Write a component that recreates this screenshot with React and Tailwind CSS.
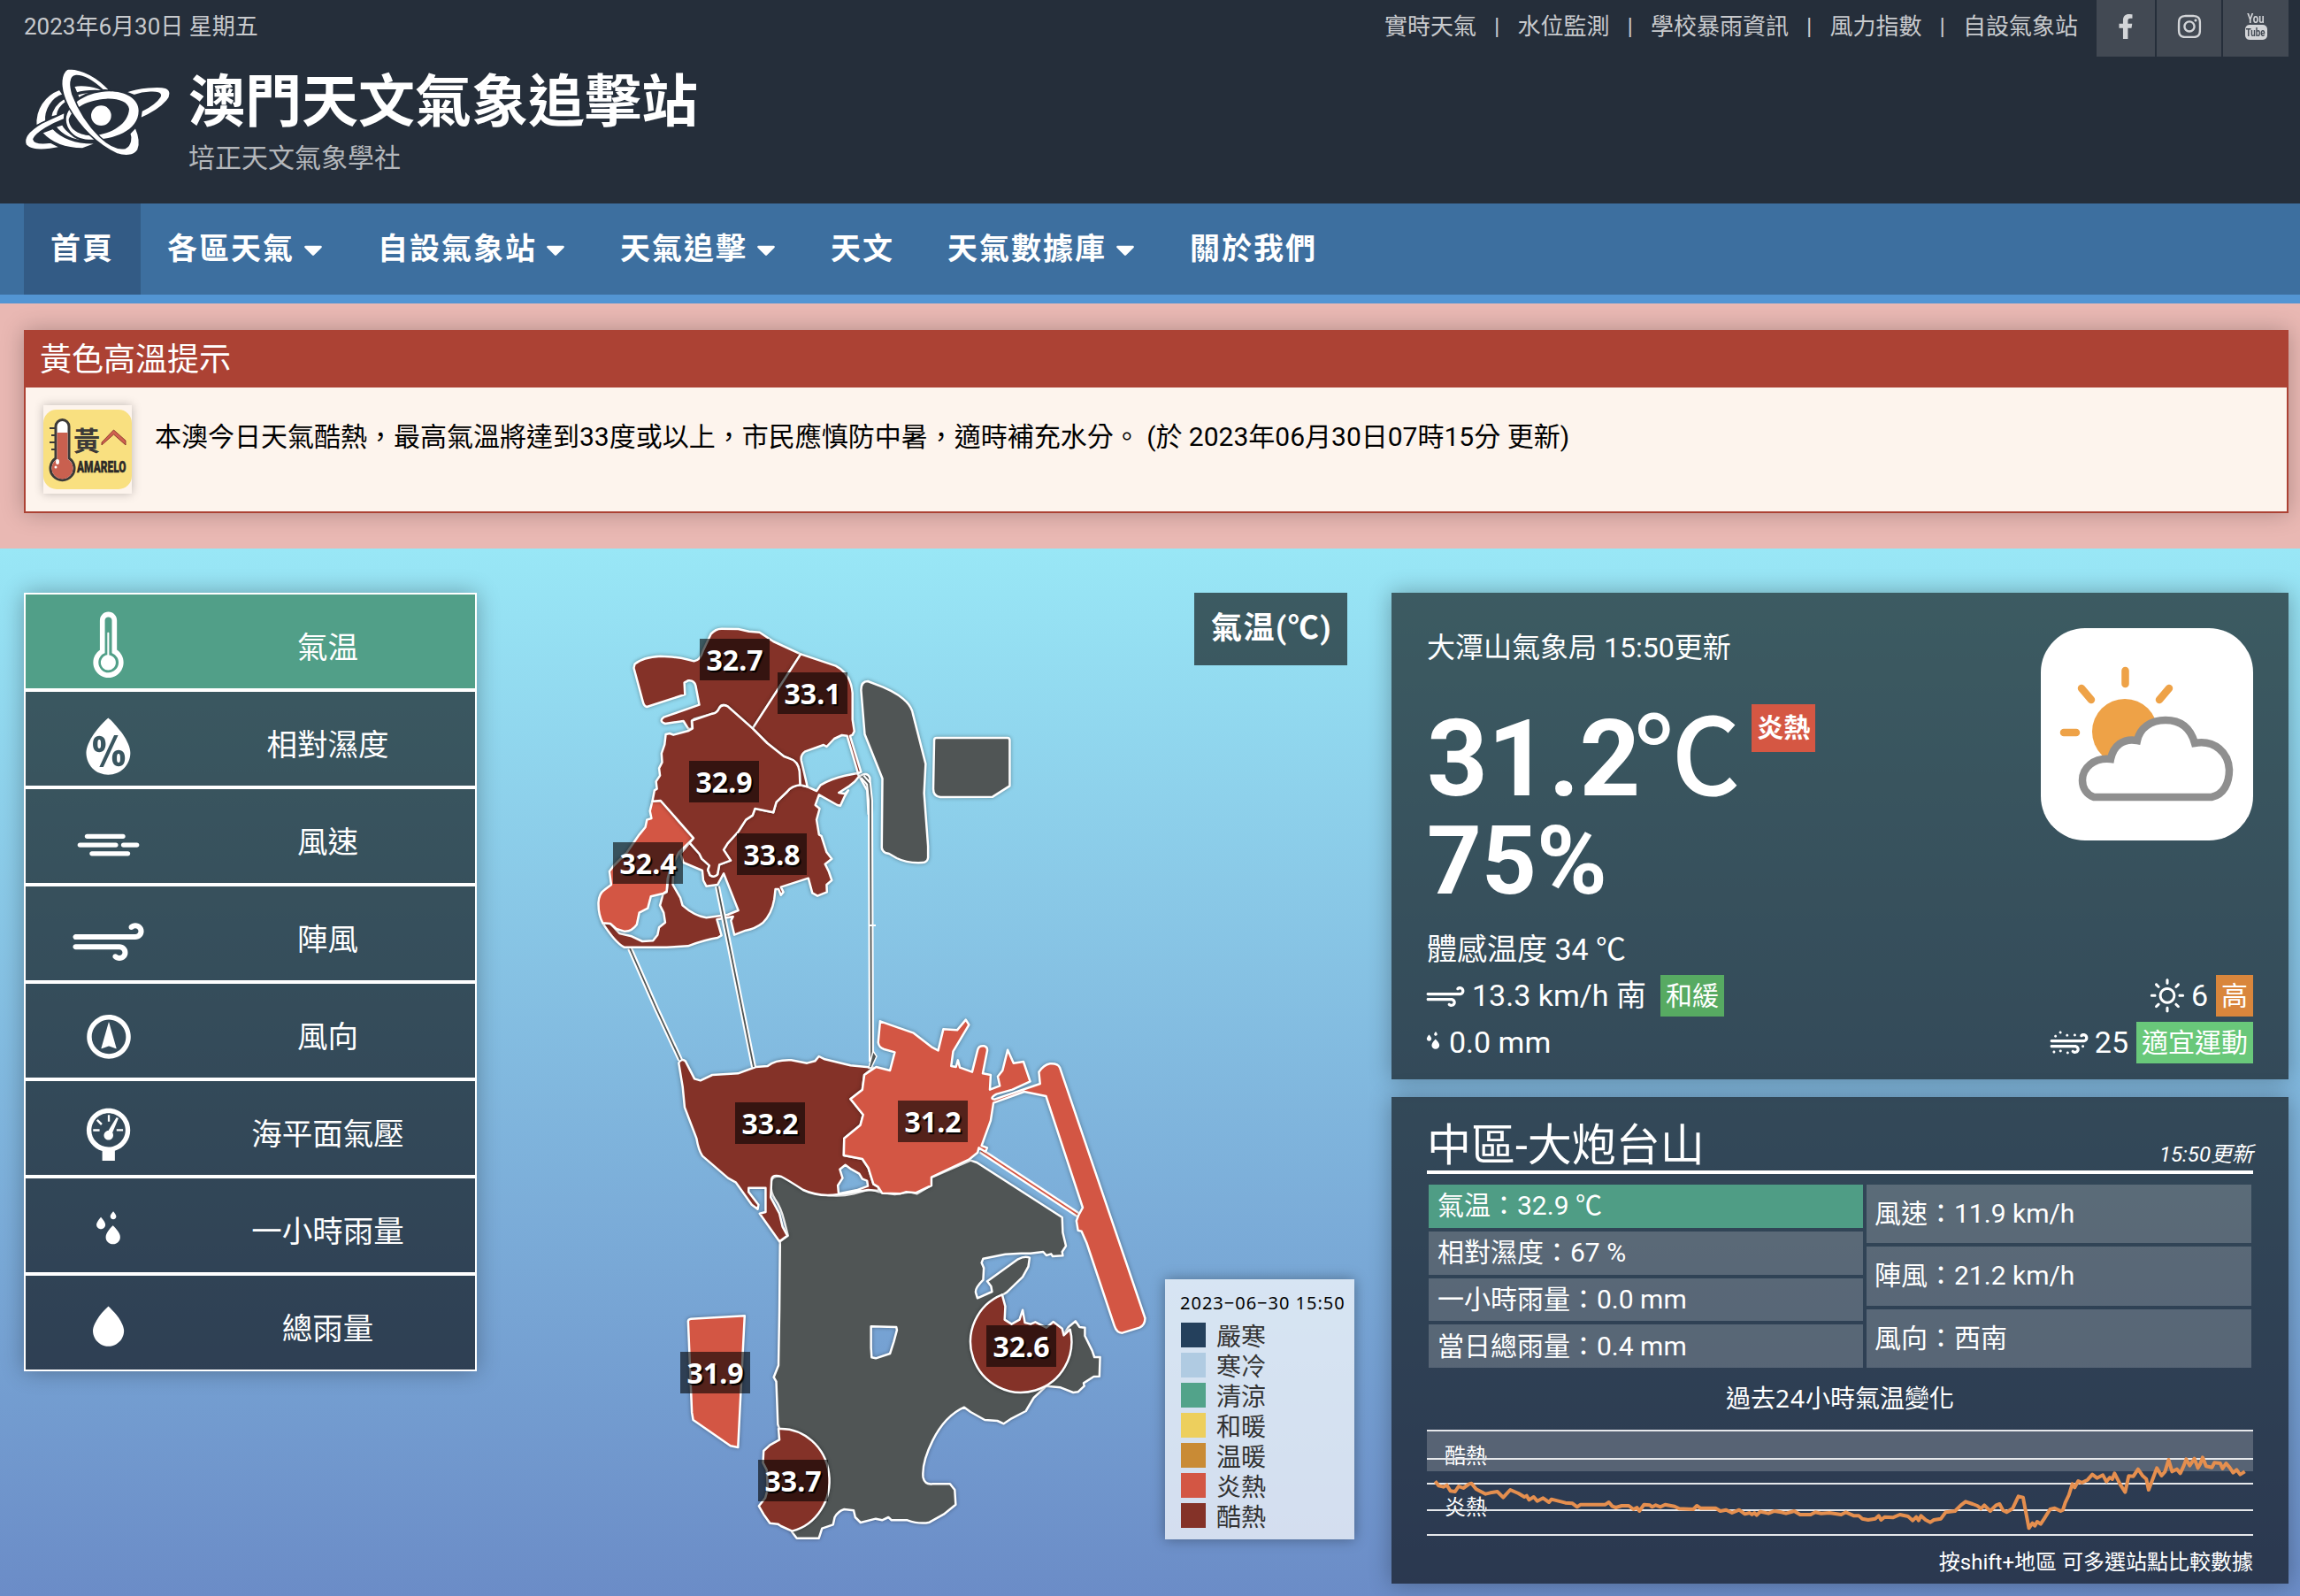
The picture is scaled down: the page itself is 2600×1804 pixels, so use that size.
import React from 'react';
import { FaFacebookF, FaInstagram, FaCaretDown } from 'react-icons/fa';
import {
  WiThermometer, WiHumidity, WiWindy, WiStrongWind, WiWindDeg,
  WiBarometer, WiRaindrops, WiRaindrop, WiDaySunny, WiSandstorm,
} from 'react-icons/wi';

const topLinks = ['實時天氣', '水位監測', '學校暴雨資訊', '風力指數', '自設氣象站'];

const navItems = [
  { label: '首頁', active: true },
  { label: '各區天氣', menu: true },
  { label: '自設氣象站', menu: true },
  { label: '天氣追擊', menu: true },
  { label: '天文' },
  { label: '天氣數據庫', menu: true },
  { label: '關於我們' },
];

const layers = [
  { label: '氣温', Icon: WiThermometer, active: true },
  { label: '相對濕度', Icon: WiHumidity },
  { label: '風速', Icon: WiWindy },
  { label: '陣風', Icon: WiStrongWind },
  { label: '風向', Icon: WiWindDeg, small: true },
  { label: '海平面氣壓', Icon: WiBarometer },
  { label: '一小時雨量', Icon: WiRaindrops },
  { label: '總雨量', Icon: WiRaindrop },
];

const legend = [
  ['嚴寒', 'bg-[#24405c]'],
  ['寒冷', 'bg-[#b0cbe2]'],
  ['清涼', 'bg-[#52a38a]'],
  ['和暖', 'bg-[#edcf5d]'],
  ['温暖', 'bg-[#c98b35]'],
  ['炎熱', 'bg-[#d35644]'],
  ['酷熱', 'bg-[#843228]'],
];

const stations = [
  { value: '32.7', x: 791, y: 722 },
  { value: '33.1', x: 879, y: 760 },
  { value: '32.9', x: 779, y: 860 },
  { value: '32.4', x: 693, y: 952 },
  { value: '33.8', x: 833, y: 942 },
  { value: '33.2', x: 831, y: 1246 },
  { value: '31.2', x: 1015, y: 1244 },
  { value: '31.9', x: 769, y: 1528 },
  { value: '33.7', x: 857, y: 1650 },
  { value: '32.6', x: 1115, y: 1498 },
];

const MAP_LEFT = 539;
const MAP_TOP = 670;

function Logo() {
  return (
    <svg viewBox="0 0 600 390" className="-mt-[4px] -ml-[17px] h-[130px] w-[200px] shrink-0" fill="#fff" stroke="#252e3a" strokeWidth="5">
      <path d="M172 123C120 143 88 190 92 247L126 231C122 195 146 152 184 141Z" />
      <path d="M112 270C142 303 190 324 250 324L304 304C240 308 186 293 150 256Z" />
      <path d="M142 218C146 188 160 170 188 153L194 166C174 180 165 195 164 212Z" />
      <path d="M158 250C182 282 220 297 262 298C228 286 196 270 182 242Z" />
      <path d="M220 112C250 106 300 112 322 129C290 127 254 128 230 136Z" />
      <path d="M232 140C256 132 290 130 308 134C275 138 252 145 238 156Z" />
      <path d="M190 201L110 238C60 268 48 292 58 312C74 330 120 331 176 320L142 303C110 307 86 304 84 292C92 270 150 238 188 224Z" />
      <path d="M396 132C440 116 510 110 532 118C552 125 550 147 536 162C515 187 482 206 446 222L450 196C480 181 505 160 513 147C518 135 500 132 480 133C460 134 440 138 425 143Z" />
      <path fill="#252e3a" d="M445 195C445 150 395 125 340 125C265 127 205 160 190 215C185 255 215 295 270 298C345 302 430 270 445 195Z" />
      <path fillRule="evenodd" stroke="none" d="M440 195C440 155 395 130 340 130C270 132 210 165 195 215C190 250 215 290 270 293C340 297 440 270 440 195ZM408 190C405 165 370 153 330 155C270 158 215 185 203 225C205 260 240 280 285 280C350 275 405 240 408 190Z" />
      <path d="M206 53C252 55 302 83 344 127L318 125C285 95 250 76 228 77C205 80 208 110 216 140C235 190 270 245 310 285C345 318 375 326 395 322C415 312 415 285 410 273L430 252C442 280 446 310 438 328C425 352 390 350 365 341C300 312 240 250 203 185C178 135 177 100 181 82C186 63 195 53 206 53Z" />
      <circle cx="313" cy="212" r="34" stroke="none" />
    </svg>
  );
}

function OldYoutube() {
  return (
    <div className="flex flex-col items-center font-bold">
      <span className="h-[13px] scale-x-75 text-[15px] leading-[13px]">You</span>
      <span className="flex h-[17px] w-[25px] items-center justify-center rounded-[5px] bg-[#d3d5d8] text-[13px] leading-none text-[#424953]">
        <span className="scale-x-75">Tube</span>
      </span>
    </div>
  );
}

function AlertImage() {
  return (
    <svg viewBox="0 0 100 100" className="size-[100px] bg-[#fdf4ed] shadow-[0_0_10px_rgba(0,0,0,0.25)]">
      <rect x="0" y="5" width="100" height="90" rx="15" fill="#f9e080" />
      <path d="M7 26h8M9 34h6M7 42h8M9 50h6" stroke="#3c3a38" strokeWidth="2" />
      <path d="M14 60V24a7.500 7.500 0 0 1 15 0V60a13.500 13.500 0 1 1 -15 0Z" fill="#fff" stroke="#3c3a38" strokeWidth="3" />
      <path d="M15.500 31H27.500V61a12 12 0 1 1 -12 0Z" fill="#c9604f" />
      <ellipse cx="16" cy="64" rx="2" ry="3" fill="#fff" />
      <circle cx="14" cy="70" r="1.500" fill="#fff" />
      <text x="34" y="51" fontSize="30" fontWeight="700" fill="#3c3a38" fontFamily="Noto Sans CJK TC">黃</text>
      <path d="M66 42L79.500 28L93 40V45L79.500 33L66 45Z" fill="#d0604f" stroke="#8d3b31" strokeWidth="1" />
      <g transform="translate(38 76) scale(0.68 1)">
        <text x="0" y="0" fontSize="17.500" fontWeight="900" fill="#2c2a28" stroke="#2c2a28" strokeWidth="0.500" fontFamily="Roboto">AMARELO</text>
      </g>
    </svg>
  );
}

function Shape({ d, fill, rule }) {
  return (
    <path
      d={d}
      fill={fill}
      fillRule={rule}
      stroke="#fff"
      strokeWidth="2.500"
      strokeLinejoin="round"
      vectorEffect="non-scaling-stroke"
      className="[filter:drop-shadow(0_0_6px_rgba(0,0,0,0.35))]"
    />
  );
}

const HOT = '#843228';
const WARM = '#d35644';
const NONE = '#505555';

function Bridge({ points }) {
  return (
    <g fill="none">
      <polyline points={points} stroke="#fff" strokeWidth="6" />
      <polyline points={points} stroke={NONE} strokeWidth="1.800" />
    </g>
  );
}

function MacauMap() {
  return (
    <svg viewBox="539 670 1034 1134" className="h-[1134px] w-[1034px]">
      <g transform="translate(740 1300) scale(0.35714 0.33333)">
        <Shape
          fill={NONE}
          rule="evenodd"
          d="M368 110Q370 84 405 90Q480 140 530 150Q580 160 630 148L685 132L710 142L760 150L810 142L830 148L875 120L872 95L1000 35L1020 42L1290 228L1292 280L1302 325L1290 345L1292 358L1260 360L1255 352L1240 357L1230 345L1190 350L1160 350L1110 353L1040 368L1035 382L1042 400L1040 440Q1012 470 1017 485L1022 502L1068 480L1065 462L1053 445L1150 370Q1172 358 1187 365L1183 395L1165 430L1115 482L1100 492L1110 620L1280 640L1295 625L1310 600L1332 580L1345 600L1362 602L1362 630L1385 680L1392 702L1410 702L1408 767L1390 768L1358 790L1360 800L1340 820L1325 822L1285 805L1240 800L1200 840L1175 885L1130 910L1105 928L1085 918L1045 915L1000 888L980 872Q920 900 880 985Q845 1060 850 1110Q855 1135 880 1132L935 1132L950 1152L953 1202L915 1235L870 1262Q840 1270 800 1255L750 1255L740 1245L720 1255L700 1250L652 1263L635 1245L630 1222L600 1218Q580 1225 570 1245L565 1270L530 1283L520 1316L450 1316L435 1295L393 1150L395 945L390 930L387 840L385 785L377 770L392 730L395 540L397 310L422 290L410 240Q400 195 380 165Q366 140 368 110ZM685 598L765 600L767 610L757 650L745 690L700 706L687 703L685 670Z"
        />
        <Shape fill={HOT} d="M1100 490A160 172 0 1 0 1315 608L1295 628L1290 605L1262 582L1240 602L1205 583L1190 590L1172 585L1165 542L1155 575L1130 590L1108 575L1110 530Z" />
        <Shape fill={HOT} d="M392 945A154 176 0 0 1 435 1292L400 1275L390 1268L365 1265L345 1235L330 1207L350 1180L358 1150L355 1085L343 1060L345 1020L365 1000L395 982Z" />
        <Shape fill={WARM} d="M106 580Q107 573 115 572L285 562L264 1008L240 1003L122 915L118 890Z" />
      </g>
      <g transform="translate(640 1060) scale(0.44643 0.33333)">
        <Shape
          fill={HOT}
          rule="evenodd"
          d="M285 425Q290 408 302 418L325 478L340 484L370 465L435 460L480 438L510 435Q530 413 570 415L610 425L630 418L640 402L655 412L720 433L778 440L755 465L750 515L720 547L752 600L745 635L704 680L703 738L750 750L765 780L778 835L790 845L792 858L765 855L690 870Q640 880 600 855Q560 820 545 810Q522 800 520 820L518 880L540 935L548 980L560 1010L540 1030L490 935L505 930L505 848L462 848L462 862L487 905L485 920L470 905L430 830L410 815L345 740Q335 720 330 680L300 575L295 505ZM690 868L688 840L700 815L693 785L707 770L722 785L742 800L750 818L762 824L764 842L735 856Z"
        />
        <g>
          <path d="M1050 722L1300 943" stroke="#fff" strokeWidth="6.500" vectorEffect="non-scaling-stroke" />
          <path d="M1050 722L1300 943" stroke={WARM} strokeWidth="1.800" vectorEffect="non-scaling-stroke" />
        </g>
        <Shape
          fill={WARM}
          d="M795 283L880 323L925 370L942 382L955 310L990 313L1012 278L1020 295L980 385L975 435L987 438L992 415L997 440L1028 455L1042 380Q1045 365 1058 367Q1068 370 1066 385L1055 460L1075 465L1073 515L1098 502L1093 470L1105 450L1118 380L1133 425L1158 420L1175 487L1130 515L1090 530Q1070 545 1085 548L1200 495L1197 455Q1210 430 1225 427Q1245 425 1250 440L1466 1290Q1466 1313 1452 1322L1408 1340Q1394 1340 1388 1315L1318 1035L1305 995L1296 992L1292 960L1297 942L1308 915L1215 537L1160 522L1082 560L1075 620L1052 705L1066 712L1062 726L1045 712L1042 728L1020 752L925 812L925 840L885 865L860 862L845 868L800 866L790 845L778 835L765 780L750 750L703 738L704 680L745 635L752 600L720 547L750 515L755 465L785 438L820 450L832 388L805 378Q792 372 790 355Z"
        />
      </g>
      <Bridge points="712,1072 742,1140 769,1198" />
      <g transform="translate(640 680) scale(0.34439 0.33333)">
        <Shape fill={NONE} d="M968 300Q968 270 990 270L1040 290Q1130 330 1138 380L1180 550L1175 650L1188 830L1188 868Q1186 884 1170 885Q1120 888 1085 870L1060 855L1048 852Q1037 845 1036 835L1038 600L980 450Z" />
        <Shape fill={NONE} d="M1216 462L1448 462Q1456 462 1456 470L1456 625L1400 662L1228 663Q1205 660 1205 635L1208 470Q1208 462 1216 462Z" />
        <Shape fill={NONE} d="M962 592Q988 575 997 598L1000 700L992 720L988 640Z" />
        <Shape
          fill={HOT}
          d="M768 622L792 628L822 642L835 622Q870 600 915 590L955 582L962 592L948 610L930 625L895 648L915 652L926 640L912 665L900 692L890 690L830 655L818 690L832 702L822 740L830 790L838 795L855 850L872 872L850 890L862 915L872 945L855 960L856 985L825 998L808 988L795 938L705 968L713 985L705 995L697 975L687 975L683 1010Q675 1060 645 1090Q620 1110 590 1115L552 1130L541 1082L548 1068L495 1078L510 1132L497 1140Q460 1145 400 1168L330 1172L190 1172Q160 1155 120 1090L145 1092L175 1125L215 1135L250 1152L285 1150L300 1130L305 1105L325 1088L320 1055L308 1030L318 992L330 985L338 912L352 890L350 960L375 1005L382 1030Q420 1065 460 1072L530 1062L565 1047L517 922L497 960L460 965L450 945L447 912L385 885L375 855L405 818L437 855L445 872L470 895L465 910L472 928Q485 938 497 925L503 892L540 878L517 842L530 820L565 780L590 740L612 725L620 702L680 715L690 680L725 645Q740 625 768 622Z"
        />
        <Shape fill={WARM} d="M283 677L310 675L418 802L370 850L340 912L333 940L330 982L318 990L278 1000L268 1040L240 1055L232 1095Q215 1120 190 1118L165 1110L145 1092L120 1090Q105 1060 106 1020Q108 990 125 978L148 960L142 915L155 897L200 850L240 790L260 765L265 740L280 735L275 710Z" />
        <Shape fill={HOT} d="M222 225L225 212Q250 188 310 185Q370 186 420 202Q440 200 450 165L475 110Q490 92 510 92L565 93L600 101L635 104L680 135L770 178L612 430L530 355Q510 345 502 362Q495 378 480 380L420 398L412 404L413 430L402 433L385 405L325 414Q303 405 320 392L437 350L425 285Q420 265 400 268L388 275L390 315L265 357Q255 355 252 340Z" />
        <Shape fill={HOT} d="M770 178L885 218Q935 245 940 310L940 400L946 440L940 452L932 456L968 578L958 582L922 455L905 453L880 465L855 492L845 486L785 508Q768 520 772 540L792 628L768 622L766 575Q760 540 735 533L715 525L660 480L612 430Z" />
        <Shape fill={HOT} d="M612 430L660 480L715 525L735 533Q760 540 766 575L768 622Q740 625 725 645L690 680L680 715L620 702L612 725L590 740L565 780L530 820L517 842L540 878L503 892L497 925Q485 938 472 928L465 910L470 895L445 872L437 855L405 818L418 802L310 675L283 677L290 640L298 635L295 610L308 590L305 565L315 545L313 515L323 485L327 450L340 447L352 452L402 438L415 430L413 404L480 380Q495 378 502 362Q510 345 530 355Z" />
      </g>
      <Bridge points="811,1002 852,1206" />
      <Bridge points="975,878 982,886 984,905 985,1200" />
      <path d="M987 1188L991 1194L985 1207L982 1207Z" fill={NONE} stroke="#fff" strokeWidth="1.500" />
      <path d="M982 1046h8" stroke="#fff" strokeWidth="2" />
    </svg>
  );
}

function Tag({ className, children }) {
  return <span className={`flex items-center justify-center px-[6px] text-[30px] leading-none ${className}`}>{children}</span>;
}

function Celsius({ className = '' }) {
  return <span className={`font-['Noto_Sans_CJK_TC'] leading-[0] ${className}`}>℃</span>;
}

function WeatherIcon() {
  return (
    <svg viewBox="0 0 240 240" className="size-[240px] rounded-[50px] bg-white">
      <g stroke="#eea247" strokeWidth="8.500" strokeLinecap="round">
        <path d="M95.500 48V63M46 68L57 81M145 68L134 81M26 118H40" />
      </g>
      <circle cx="95" cy="117" r="37" fill="#eea247" />
      <path
        d="M60 191H193C207 188 213 175 213 160C212 141 197 126 174 130C169 112 158 104 141 104C124 104 112 113 109 127C93 124 82 133 79 148C60 146 47 158 47 172C47 181 52 188 60 191Z"
        fill="#fff"
        stroke="#8f8f8f"
        strokeWidth="8.500"
      />
    </svg>
  );
}

function CurrentPanel() {
  return (
    <section className="flex h-[550px] flex-col bg-black/60 px-10 pt-10 text-white shadow-[0_0_24px_rgba(0,0,0,0.3)]">
      <div className="flex h-[352px] justify-between">
        <div>
          <div className="mt-[1px] text-[32px] leading-[42px]">大潭山氣象局 15:50更新</div>
          <div className="mt-[53px] flex h-[104px]">
            <div className="text-[120px] leading-[104px] font-bold">31.2<Celsius className="-ml-[7px] font-medium" /></div>
            <Tag className="-mt-[10px] ml-[13px] h-[54px] bg-[#d55743] font-bold">炎熱</Tag>
          </div>
          <div className="mt-[9px] text-[108px] leading-[108px] font-bold">75%</div>
        </div>
        <WeatherIcon />
      </div>
      <div className="-mt-[10px] text-[34px] leading-[42px]">體感温度 34 <Celsius /></div>
      <div className="mt-[5px] flex h-[53px] items-center justify-between text-[34px]">
        <div className="flex items-center">
          <WiStrongWind className="-my-2 mr-[3px] -ml-[6px] size-[54px]" />
          13.3 km/h 南
          <Tag className="ml-[16px] h-[47px] bg-[#57aa62]">和緩</Tag>
        </div>
        <div className="flex items-center">
          <WiDaySunny className="-my-2 size-[54px]" />
          6
          <Tag className="ml-[9px] h-[47px] bg-[#d9863c]">高</Tag>
        </div>
      </div>
      <div className="flex h-[53px] items-center justify-between text-[34px]">
        <div className="flex items-center">
          <WiRaindrops className="-my-2 -mr-[9px] -ml-[20px] size-[54px]" />
          0.0 mm
        </div>
        <div className="flex items-center">
          <WiSandstorm className="-my-2 mr-[2px] size-[54px]" />
          25
          <Tag className="ml-[9px] h-[47px] bg-[#69c87a]">適宜運動</Tag>
        </div>
      </div>
    </section>
  );
}

const tempLine =
  '94,403 100,418 108,422 114,416 120,436 128,438 134,420 142,426 152,412 156,410 164,430 172,438 180,446 188,442 200,438 210,458 222,432 236,444 246,456 250,452 254,466 262,456 268,470 278,460 288,474 292,464 304,470 316,476 328,478 336,490 342,482 384,482 390,474 396,488 402,492 412,486 424,486 432,498 438,492 442,504 450,482 460,484 464,490 470,484 478,490 486,482 502,488 510,496 534,498 540,486 546,494 572,494 580,504 590,500 600,510 612,500 622,514 630,510 634,516 638,510 642,518 648,506 662,512 672,504 684,508 692,512 706,504 716,516 734,516 742,508 752,512 766,510 786,516 794,508 808,520 816,520 822,530 832,534 844,530 850,520 854,534 860,524 874,526 886,516 900,522 908,536 914,524 918,536 922,520 930,534 938,542 944,534 956,530 964,508 980,504 990,484 998,472 1010,480 1018,486 1024,496 1030,484 1040,504 1050,484 1056,480 1062,502 1068,508 1078,496 1088,454 1096,458 1100,500 1106,562 1112,545 1116,554 1120,540 1126,548 1132,530 1142,498 1150,494 1160,504 1164,500 1168,475 1174,450 1180,412 1184,424 1190,402 1196,408 1206,398 1214,380 1222,392 1232,382 1238,404 1244,390 1248,396 1252,376 1262,415 1270,440 1276,385 1284,386 1292,362 1300,385 1306,395 1310,432 1318,390 1324,358 1332,384 1338,370 1344,330 1350,370 1358,362 1364,376 1370,350 1374,328 1380,350 1388,326 1394,358 1398,344 1402,322 1408,352 1418,356 1422,340 1432,342 1436,360 1442,342 1448,356 1454,374 1460,364 1466,380 1474,370';

function TempChart() {
  return (
    <svg viewBox="1613 1607 934 140" className="h-[140px] w-[934px]">
      <rect x="1613" y="1617" width="934" height="46" fill="#fff" fillOpacity="0.2" />
      <text x="1633" y="1654" fontSize="24" fill="#fff">酷熱</text>
      <text x="1633" y="1712" fontSize="24" fill="#fff">炎熱</text>
      <path d="M1613 1617H2547M1613 1649H2547M1613 1677H2547M1613 1707H2547M1613 1735H2547" stroke="#e6e8eb" strokeWidth="2" />
      <g transform="translate(1560 1540) scale(0.66327 0.33333)">
        <polyline points={tempLine} fill="none" stroke="#e58f4f" strokeWidth="4" strokeLinejoin="round" vectorEffect="non-scaling-stroke" />
      </g>
    </svg>
  );
}

const leftReadings = [
  { label: '氣温：32.9 ', celsius: true },
  { label: '相對濕度：67 %' },
  { label: '一小時雨量：0.0 mm' },
  { label: '當日總雨量：0.4 mm' },
];
const rightReadings = ['風速：11.9 km/h', '陣風：21.2 km/h', '風向：西南'];

function StationPanel() {
  return (
    <section className="flex h-[550px] flex-col bg-black/60 px-10 text-white shadow-[0_0_24px_rgba(0,0,0,0.3)]">
      <div className="flex h-[87px] items-end justify-between border-b-4 border-white">
        <h2 className="text-[50px] leading-[56px]">中區-大炮台山</h2>
        <span className="pb-[3px] text-[24px] leading-[30px] italic">15:50更新</span>
      </div>
      <div className="mx-[2px] mt-[12px] flex h-[207px] gap-1 text-[30px] leading-none">
        <div className="grid w-[491px] grid-rows-4 gap-1">
          {leftReadings.map(({ label, celsius }) => (
            <div key={label} className={`flex items-center pl-[10px] ${celsius ? 'bg-[#4f9d85]' : 'bg-white/20'}`}>
              <span className="whitespace-pre">{label}{celsius && <Celsius />}</span>
            </div>
          ))}
        </div>
        <div className="grid flex-1 grid-rows-3 gap-1">
          {rightReadings.map((r) => (
            <div key={r} className="flex items-center bg-white/20 pl-[9px]">{r}</div>
          ))}
        </div>
      </div>
      <div className="mt-[14px] text-center text-[28px] leading-[40px]">
        過去<span className="font-['Noto_Sans'] tracking-[1px]">24</span>小時氣温變化
      </div>
      <div className="mt-[5px]"><TempChart /></div>
      <div className="mt-[1px] text-right text-[24px] leading-[36px]">按shift+地區 可多選站點比較數據</div>
    </section>
  );
}

export default function App() {
  return (
    <div className="h-[1804px] w-[2600px] overflow-hidden font-[Roboto,'Noto_Sans_CJK_TC',sans-serif]">
      <header className="h-[230px] bg-[#252e3a] pr-[13px] pl-[27px]">
        <div className="flex h-16 justify-between text-[26px] leading-[60px] text-[#c8cacd]">
          <div>2023年6月30日 星期五</div>
          <div className="flex">
            <ul className="mr-[21px] flex">
              {topLinks.map((t, i) => (
                <li key={t} className="flex">
                  {i > 0 && <span className="w-[46.500px] text-center">|</span>}
                  {t}
                </li>
              ))}
            </ul>
            <div className="flex gap-[2px] text-[#d3d5d8]">
              <span className="flex w-[66px] items-center justify-center bg-[#424953]"><FaFacebookF className="-mt-1 size-7" /></span>
              <span className="flex w-[73px] items-center justify-center bg-[#424953]"><FaInstagram className="-mt-1 size-[30px]" /></span>
              <span className="flex w-[74px] items-center justify-center bg-[#424953] pb-1"><OldYoutube /></span>
            </div>
          </div>
        </div>
        <div className="flex">
          <Logo />
          <div className="ml-[3px] pt-[12px]">
            <h1 className="text-[64px] leading-[80px] font-bold text-white">澳門天文氣象追擊站</h1>
            <p className="mt-[3px] text-[30px] leading-[40px] text-[#b4b7bb]">培正天文氣象學社</p>
          </div>
        </div>
      </header>

      <nav className="flex h-[113px] border-b-[10px] border-[#5395d3] bg-[#3d6f9f] pl-[27px] text-[34px] font-bold tracking-[2px] text-white">
        {navItems.map((n) => (
          <a key={n.label} className={`flex items-center px-[30px] ${n.active ? 'bg-[#335b85]' : ''}`}>
            {n.label}
            {n.menu && <FaCaretDown className="ml-[8px] h-[34px] w-[26px]" />}
          </a>
        ))}
      </nav>

      <div className="h-[277px] bg-[#e9b8b3] pt-[30px] pr-[13px] pl-[27px]">
        <div className="h-[207px] border-2 border-[#ac4234] bg-[#fdf4ed] shadow-[0_0_24px_rgba(0,0,0,0.25)]">
          <div className="h-[63px] bg-[#ac4234] pl-[16px] text-[36px] leading-[64px] text-white">黃色高溫提示</div>
          <div className="flex px-[20px] pt-[20px]">
            <AlertImage />
            <p className="ml-[26px] pt-[16px] text-[30px] leading-[40px] text-black">
              本澳今日天氣酷熱，最高氣溫將達到33度或以上，市民應慎防中暑，適時補充水分。 (於 2023年06月30日07時15分 更新)
            </p>
          </div>
        </div>
      </div>

      <main className="flex h-[1184px] bg-linear-to-b from-[#99e7f6] to-[#6b8cc7] pt-[50px] pr-[13px] pl-[27px]">
        <ul className="h-[880px] w-[512px] shrink-0 text-white shadow-[0_0_24px_rgba(0,0,0,0.3)]">
          {layers.map(({ label, Icon, active, small }) => (
            <li key={label} className={`flex h-[110px] items-center border-2 border-white ${active ? 'bg-[#519f88]' : 'bg-black/60'}`}>
              <span className="ml-[43px] flex h-[101px] w-[101px] items-center justify-center pt-[16px]">
                <Icon className={small ? 'size-[66px] shrink-0' : 'size-[101px] shrink-0'} />
              </span>
              <span className="mr-[31px] flex-1 pt-[15px] pl-[62px] text-center text-[34.500px] leading-none">{label}</span>
            </li>
          ))}
        </ul>

        <div className="relative w-[1034px] shrink-0">
          <MacauMap />
          {stations.map((s) => (
            <span
              key={s.value}
              className="absolute flex h-[47px] w-[79px] items-center justify-center bg-black/60 font-['Noto_Sans'] text-[32px] leading-none font-bold text-white [text-shadow:2px_2px_1px_#000]"
              style={{ left: s.x - MAP_LEFT, top: s.y - MAP_TOP }}
            >
              {s.value}
            </span>
          ))}
          <div className="absolute top-0 right-[50px] flex h-[82px] w-[173px] items-center justify-center bg-black/60 pl-[2px] text-[35px] font-bold tracking-[1.500px] text-white">
            <span>氣温(<Celsius />)</span>
          </div>
          <div className="absolute top-[776px] right-[42px] h-[294px] w-[214px] bg-white/70 px-[17px] pt-[14px] text-black shadow-[0_0_14px_rgba(0,0,0,0.35)]">
            <div className="font-['Noto_Sans'] text-[20px] leading-[26px] tracking-[1px] whitespace-nowrap">2023−06−30 15:50</div>
            <ul className="mt-[9px] flex flex-col gap-[6px]">
              {legend.map(([label, color]) => (
                <li key={label} className="flex h-[28px] items-center gap-[12px]">
                  <span className={`ml-[1px] size-[28px] ${color}`} />
                  <span className="pt-[5px] text-[28px] leading-[28px] text-[#333]">{label}</span>
                </li>
              ))}
            </ul>
          </div>
        </div>

        <div className="flex w-[1014px] shrink-0 flex-col gap-5">
          <CurrentPanel />
          <StationPanel />
        </div>
      </main>
    </div>
  );
}
